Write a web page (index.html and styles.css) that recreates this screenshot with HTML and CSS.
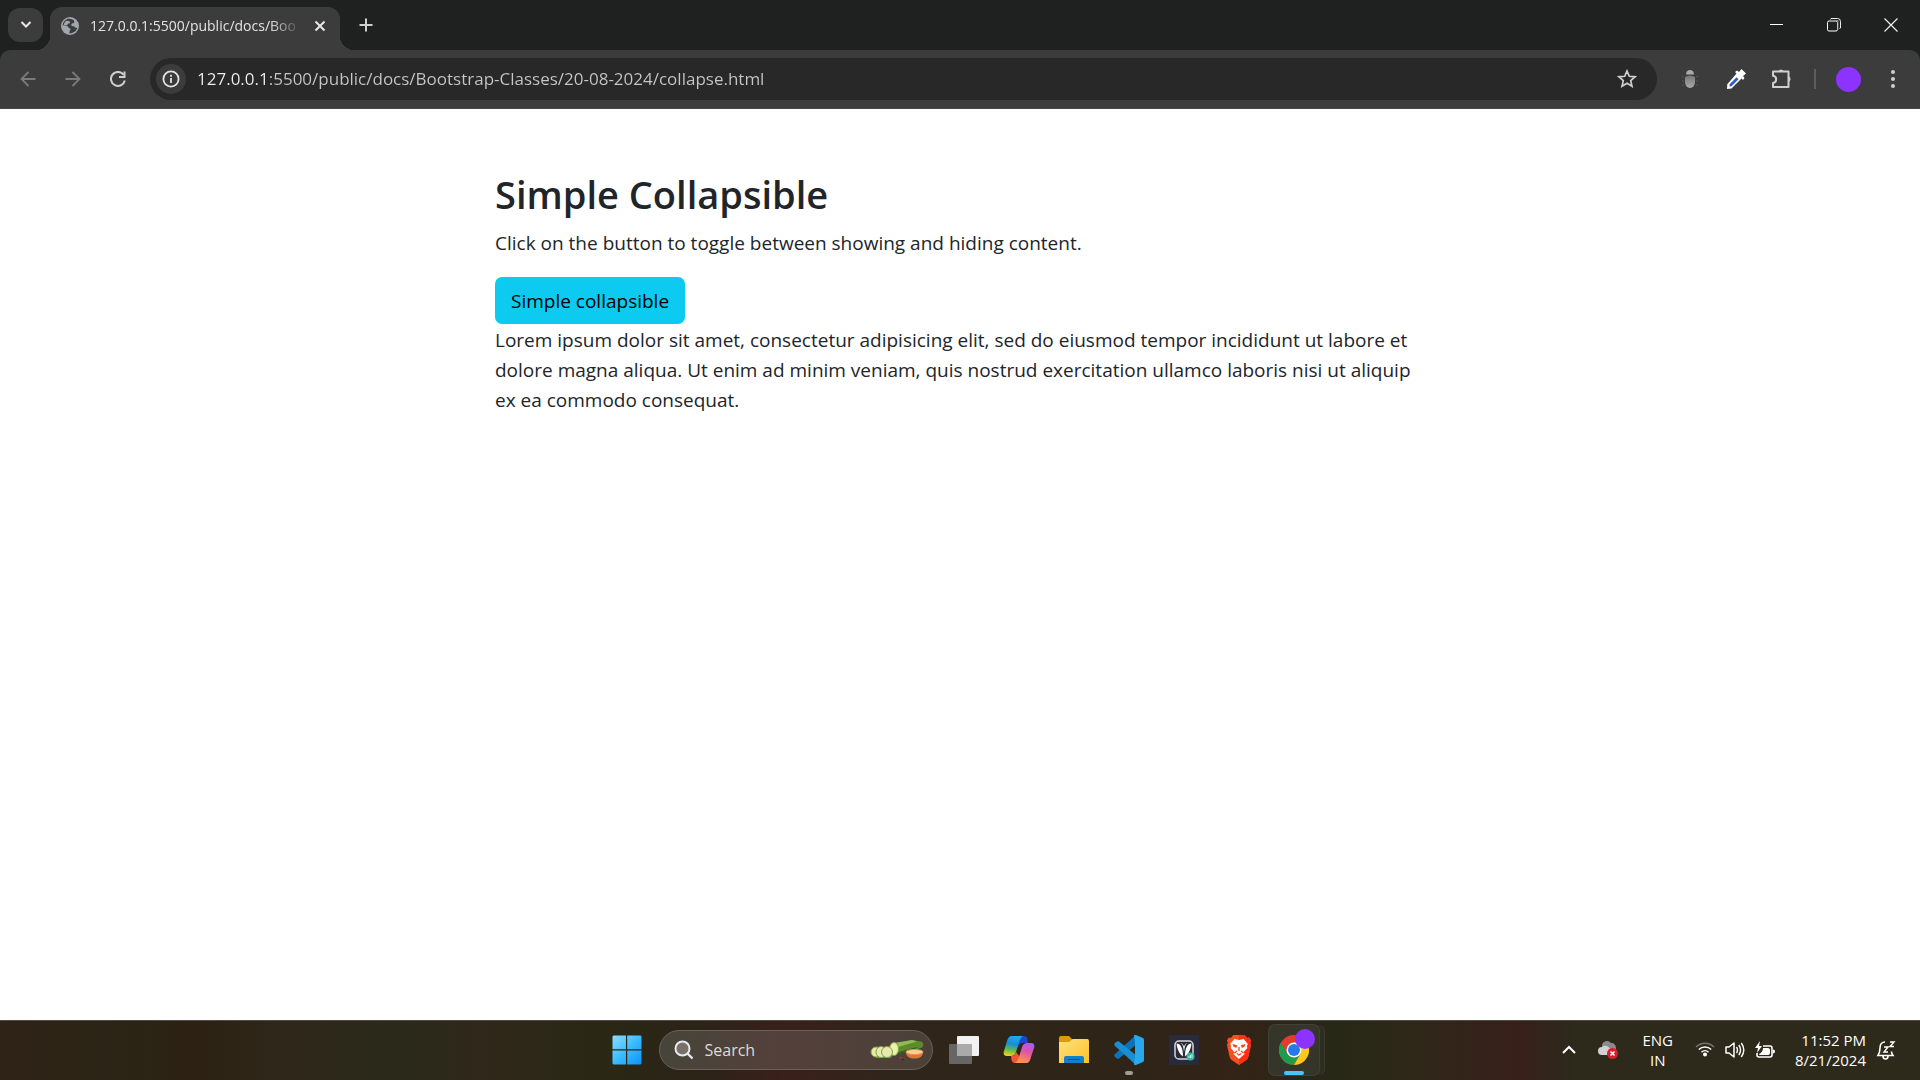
FILE: index.html
```html
<!DOCTYPE html>
<html lang="en">
<head>
<meta charset="utf-8">
<title>Simple Collapsible</title>
<link rel="stylesheet" href="styles.css">
</head>
<body>
<header class="browser">
  <div class="tab-strip">
    <button class="tab-search" aria-label="Search tabs"><svg width="12" height="12" viewBox="0 0 12 12"><path d="M1.500 3 6 7.500 10.500 3" fill="none" stroke="#e8e8e8" stroke-width="2"/></svg></button>
    <div class="tab">
      <svg width="18" height="18" viewBox="0 0 18 18"><circle cx="9" cy="9" r="9" fill="#a0a6ad"/><path d="M7 1.800C4 2.600 1.800 5.300 1.600 8.400c1.700-.2 3.600.1 5 .9 1 .7.6 1.700 1.800 2 1.500.3 1.200 1.500.6 2.300-.7.900-.6 1.600-.6 2.700 3.700.3 7-2.100 7.800-5.500-.8.300-1.800.2-2.300-.6-.6-1-1.800-.8-2.800-1.200-1.200-.5-1-2-.1-2.500.8-.4 1.900-.3 2.200-1.100.2-.8-.4-1.300-.3-2.200C11.500 2.200 9 1.300 7 1.800Z" fill="#3c3c3c"/><path d="M6 3.500c1 .8 2.500.2 3 1.400.3 1-.7 1.500-1.600 1.700-.9.300-.6 1.500-1.600 1.600-1 .1-2-.2-3-.1C3 6 4.200 4.200 6 3.500ZM3 11c1.200 0 2.400.4 3 1.300.4.800.3 1.800.2 2.900C4.600 14.500 3.400 13 3 11Z" fill="#a0a6ad"/></svg>
      <span class="tab-title">127.0.0.1:5500/public/docs/Boo</span>
      <button class="icon-button tab-close" aria-label="Close tab"><svg width="12" height="12" viewBox="0 0 12 12"><path d="m1.500 1.500 9 9m0-9-9 9" stroke="#e8e8e8" stroke-width="2"/></svg></button>
    </div>
    <button class="icon-button new-tab" aria-label="New tab"><svg width="14" height="14" viewBox="0 0 14 14"><path d="M7 .5v13M.5 7h13" stroke="#d0d0d0" stroke-width="2"/></svg></button>
    <div class="window-buttons">
      <button class="icon-button" aria-label="Minimize"><svg width="14" height="14" viewBox="0 0 14 14"><path d="M0 6.500h13" stroke="#fff"/></svg></button>
      <button class="icon-button" aria-label="Restore"><svg width="14" height="14" viewBox="0 0 14 14"><path d="M3.500 1.500 4 .5h6.500a3 3 0 0 1 3 3V10l-1 .5" fill="none" stroke="#eee"/><rect x=".5" y="3" width="10" height="10" rx="1.500" fill="none" stroke="#fff"/><path d="M2 2.500h9v9" fill="none" stroke="#888" stroke-width="1"/></svg></button>
      <button class="icon-button" aria-label="Close window"><svg width="14" height="14" viewBox="0 0 14 14"><path d="m.5.5 13 13m0-13-13 13" stroke="#eee" stroke-width="1.200"/></svg></button>
    </div>
  </div>
  <div class="toolbar">
    <div class="nav-buttons">
      <button class="icon-button" aria-label="Back"><svg width="16" height="16" viewBox="0 0 16 16"><path d="M15.500 8H2m6.500-7L1.500 8l7 7" fill="none" stroke="#7b7b7b" stroke-width="1.800"/></svg></button>
      <button class="icon-button" aria-label="Forward"><svg width="16" height="16" viewBox="0 0 16 16"><path d="M.5 8H14M7.500 1l7 7-7 7" fill="none" stroke="#7b7b7b" stroke-width="1.800"/></svg></button>
      <button class="icon-button" aria-label="Reload"><svg width="16" height="16" viewBox="0 0 16 16"><path d="M14.800 9.500A7 7 0 1 1 13.500 3.600" fill="none" stroke="#cfcfcf" stroke-width="2"/><path d="M14.500.5v5.500H9" fill="none" stroke="#cfcfcf" stroke-width="2"/></svg></button>
    </div>
    <div class="omnibox">
      <button class="site-info" aria-label="View site information"><svg width="18" height="18" viewBox="0 0 18 18"><circle cx="9" cy="9" r="7.600" fill="none" stroke="#e3e3e3" stroke-width="1.800"/><path d="M9 8v5M9 4.800v2" stroke="#e3e3e3" stroke-width="1.800"/></svg></button>
      <input class="address" type="text" aria-label="Address" value="127.0.0.1:5500/public/docs/Bootstrap-Classes/20-08-2024/collapse.html">
      <button class="icon-button" aria-label="Bookmark this page"><svg width="20" height="20" viewBox="0 0 20 20"><path d="m10 2 2.300 5.300 5.700.5-4.300 3.800 1.300 5.700-5-3-5 3 1.300-5.700L2 7.800l5.700-.5Z" fill="none" stroke="#cfcfcf" stroke-width="1.700"/></svg></button>
    </div>
    <div class="extensions">
      <button class="icon-button" aria-label="Debug extension"><svg width="18" height="20" viewBox="0 0 18 20"><defs><linearGradient id="bug" x2="0" y2="1"><stop stop-color="#777"/><stop offset="1" stop-color="#aaa"/></linearGradient></defs><path d="M5 5.500a4 4.500 0 0 1 8 0Z" fill="#aaa"/><path d="M4 8q5-3 10 0v5a5 6 0 0 1-10 0Z" fill="url(#bug)"/><path d="M1 7l2 1M1 12h2m-2 5 2-1.500M17 7l-2 1m2 4h-2m2 5-2-1.500" stroke="#575757"/></svg></button>
      <button class="icon-button" aria-label="Color picker"><svg width="22" height="22" viewBox="0 0 22 22"><path d="m12 5 5 5-10.500 10.500L2 21l.3-4.800Z" fill="#fff"/><path d="m11.500 9.300 2 2-7 7-2 .3.200-2.300Z" fill="#3158c8"/><path d="m10 4 2-1.500 2 1.500 2.500-3 4.500 4.500-3 2.500 1.500 2-1.500 2Z" fill="#fff"/></svg></button>
      <button class="icon-button" aria-label="Extensions"><svg width="22" height="22" viewBox="0 0 22 22"><path d="M2 3.500h15.500V19H2v-4c4.200-.7 4.200-6.500 0-7.200Z" fill="none" stroke="#cfcfcf" stroke-width="2" stroke-linejoin="round"/><path d="M7.500 3a2.800 2.800 0 0 1 5 0ZM18 8.500a2.800 2.800 0 0 1 0 5Z" fill="#cfcfcf"/></svg></button>
      <span class="divider"></span>
      <button class="avatar" aria-label="Profile"></button>
      <button class="icon-button" aria-label="Menu"><svg width="6" height="20" viewBox="0 0 6 20"><circle cx="3" cy="3" r="2" fill="#cfcfcf"/><circle cx="3" cy="10" r="2" fill="#cfcfcf"/><circle cx="3" cy="17" r="2" fill="#cfcfcf"/></svg></button>
    </div>
  </div>
</header>

<main class="page">
  <div class="container">
    <h2 class="heading">Simple Collapsible</h2>
    <p class="lead">Click on the button to toggle between showing and hiding content.</p>
    <button class="button-info" aria-expanded="true" aria-controls="demo">Simple collapsible</button>
    <div class="collapse" id="demo">Lorem ipsum dolor sit amet, consectetur adipisicing elit, sed do eiusmod tempor incididunt ut labore et dolore magna aliqua. Ut enim ad minim veniam, quis nostrud exercitation ullamco laboris nisi ut aliquip ex ea commodo consequat.</div>
  </div>
</main>

<footer class="taskbar">
  <div class="apps">
    <button class="app" aria-label="Start"><svg width="30" height="30" viewBox="0 0 30 30"><defs><linearGradient id="win" x2="1" y2="1"><stop stop-color="#8ddcff"/><stop offset=".5" stop-color="#3bbcff"/><stop offset="1" stop-color="#0c93fb"/></linearGradient></defs><path d="M1.500.5H14v13.700H.5V1.500ZM15.200.5h13.300l1 1v12.700H15.200ZM.5 15.400H14v14H1.500l-1-1ZM15.200 15.400h14.300v13l-1 1H15.200Z" fill="url(#win)"/></svg></button>
    <div class="search">
      <svg width="20" height="20" viewBox="0 0 20 20"><circle cx="8.500" cy="8.500" r="7" fill="#777168" stroke="#e9e9ee" stroke-width="2"/><path d="m13.500 13.500 5 5" stroke="#e9e9ee" stroke-width="2.400"/></svg>
      <input class="search-input" type="text" aria-label="Search" placeholder="Search">
      <svg width="54" height="24" viewBox="0 0 54 24"><path d="m22 6 20-4 9 1.500c3 1 3 5 0 6.500L25 17Z" fill="#5d8b2c"/><path d="m24 5 18-3 5 1.500L28 9Z" fill="#91b955"/><path d="m29 14 14-4 5-1-7 4-16 4Z" fill="#365d1c"/><path d="M2 14h22l-3 6H6Z" fill="#5f8f2e"/><ellipse cx="24" cy="11" rx="4.500" ry="6.500" fill="#edf0ac" stroke="#7fa53c"/><g fill="#e6ebad" stroke="#81a442"><ellipse cx="6" cy="14" rx="5" ry="5"/><ellipse cx="11" cy="14" rx="5" ry="5.500"/><ellipse cx="17" cy="14" rx="5.500" ry="5.500"/></g><path d="M36 14h17c0 5-4 6.500-8.500 6.500S36 19 36 14Z" fill="#d87835"/><ellipse cx="44.500" cy="14" rx="8.500" ry="2.500" fill="#f4cf97" stroke="#e69a55"/><path d="m29 19 3 1m-2 2 3-2 2 1" stroke="#a43b30"/></svg>
    </div>
    <button class="app" aria-label="Task view"><svg width="32" height="30" viewBox="0 0 32 30"><rect x="1" y="9" width="23" height="20" rx="1" fill="#666"/><rect x="9" y="1" width="22" height="20" rx="1" fill="#f2f2f2"/><path d="M9 9h15v12H9Z" fill="#aaa"/></svg></button>
    <button class="app" aria-label="Copilot"><svg width="32" height="30" viewBox="0 0 32 30"><defs><linearGradient id="cpa" x1=".5" x2=".3" y2="1"><stop stop-color="#20a9ef"/><stop offset=".4" stop-color="#168ed8"/><stop offset=".7" stop-color="#65b94e"/><stop offset="1" stop-color="#f3d41c"/></linearGradient><linearGradient id="cpb" x1=".7" x2=".3" y2="1"><stop stop-color="#a35dff"/><stop offset=".4" stop-color="#e153a7"/><stop offset="1" stop-color="#ff9b46"/></linearGradient></defs><path d="M17 1h4c2 0 3 1 3.500 3L25 8h-5c-3 0-4 2-5 5Z" fill="#1d45ce"/><path d="M9 1h11c-2 1-3 3-4 7l-3 9c-1 3-3 4-5 4H4c-3 0-4-2-3-5L4 6c1-3 2-5 5-5Z" fill="url(#cpa)"/><path d="M8 21c3 0 4-1 5-4l4 5-2 6h-3c-2 0-3-1-3.500-3Z" fill="#f25635"/><path d="M23 28H12c2-1 3-3 4-6l3-10c1-3 3-4 5-4h4c3 0 4 2 3 5l-3 9c-1 4-2 6-5 6Z" fill="url(#cpb)"/></svg></button>
    <button class="app" aria-label="File Explorer"><svg width="32" height="30" viewBox="0 0 32 30"><defs><linearGradient id="fold" x2="1" y2="1"><stop stop-color="#ffe17d"/><stop offset="1" stop-color="#fcc228"/></linearGradient></defs><path d="M1 3q0-2 2-2h8l3 3h16v5H1Z" fill="#dd9b09"/><path d="M1 7h10l4-3h14q2 0 2 2v22H1Z" fill="url(#fold)"/><path d="M6 28v-5q0-2 2-2h16q2 0 2 2v5Z" fill="#137ecb"/><path d="M10 24.500h12" stroke="#075495"/></svg></button>
    <button class="app running" aria-label="Visual Studio Code"><svg width="32" height="32" viewBox="0 0 32 32"><path d="M23 1 2 20c-1 1-1 2 0 3l2 1.500c1 .5 1.500.5 2 0L24 10Z" fill="#0d72b9"/><path d="M23 31 2 12c-1-1-1-2 0-3l2-1.500c1-.5 1.500-.5 2 0L24 22Z" fill="#188fd5"/><path d="m23 1 7 3q1 .5 1 2v20q0 1.500-1 2l-7 3c-1 .3-2 0-2-1l1-6V8l-1-6c0-1 1-1.300 2-1Z" fill="#2aa8ee"/></svg></button>
    <button class="app" aria-label="JioTV"><svg width="30" height="30" viewBox="0 0 30 30"><path d="M0 0h30v30H0Z" fill="#292b3b"/><rect x="6" y="6" width="18" height="18" rx="4" fill="none" stroke="#d8d8d8" stroke-width="1.500"/><path d="M7.500 8.500c4 0 6.500 4 6.500 13-4-3-6-8-6.500-13Zm15 0c-4 0-6.500 4-6.500 13 4-3 6-8 6.500-13ZM12 8c1.500 1 2.500 4 3 9 .5-5 1.500-8 3-9-1.500.5-2.500 2-3 4-.5-2-1.500-3.500-3-4Z" fill="#fff"/><circle cx="21.500" cy="21.500" r="4" fill="#35b7a1"/><path d="M20 23v-2m1.500 2v-3m1.500 3v-4" stroke="#bff1e8"/></svg></button>
    <button class="app" aria-label="Brave"><svg width="26" height="30" viewBox="0 0 28 30" preserveAspectRatio="none"><path d="m8 0h12l3 3 2-.5 2 3-1 2.500 1 2-3 12q-.5 2-2 3l-8 5-8-5q-1.500-1-2-3L1 10l1-2-1-2.500 2-3L5 3Z" fill="#f84f1f"/><path d="m14 0h6l3 3 2-.5 2 3-1 2.500 1 2-3 12q-.5 2-2 3l-8 5Z" fill="#ff2e16"/><path d="m9 4 5 1 5-1 4.500 5-1 2 .5 2-4 4 1 2-6 5-6-5 1-2-4-4 .5-2-1-2Z" fill="#fff"/><path d="m7 9 5 1.200L11 13l-3-1.500Zm14 0-5 1.200 1 2.800 3-1.500Z" fill="#f84117"/><path d="m12 16-3 2m7-2 3 2m-7.500.5L14 20l2.500-1.500M14 12v4" fill="none" stroke="#f84117" stroke-width="1.400"/></svg></button>
    <button class="app active" aria-label="Google Chrome"><svg width="30" height="30" viewBox="0 0 30 30"><circle cx="15" cy="15" r="15" fill="#e33b2e"/><path d="M2 7.500A15 15 0 0 0 15 30l6.500-11.200-13 0Z" fill="#1f9b4b"/><path d="M15 30A15 15 0 0 0 28 7.500H15l6.500 11.300Z" fill="#fcc71e"/><circle cx="15" cy="15" r="7.500" fill="#fff"/><circle cx="15" cy="15" r="6" fill="#2879e8"/></svg><span class="badge"></span></button>
  </div>
  <div class="tray">
    <button class="icon-button" aria-label="Show hidden icons"><svg width="14" height="10" viewBox="0 0 14 10"><path d="m1 8 6-6 6 6" fill="none" stroke="#fff" stroke-width="2"/></svg></button>
    <button class="icon-button cloud" aria-label="OneDrive"><svg width="20" height="18" viewBox="0 0 20 18"><path d="M4 5a5 5 0 0 1 9-3c3 0 5 2 5 5v4H4Z" fill="#8a8a8a"/><path d="M4 14a4 4 0 0 1 0-8c2-2 6-2 8 2l-2 6Z" fill="#d2d2d2"/><circle cx="14.500" cy="12.500" r="5.500" fill="#d81f2d"/><path d="m12.500 10.500 4 4m0-4-4 4" stroke="#fff" stroke-width="1.500"/></svg></button>
    <div class="language">ENG<br>IN</div>
    <div class="status">
      <svg width="20" height="16" viewBox="0 0 20 16"><path d="M1 6a12.700 12.700 0 0 1 18 0" fill="none" stroke="#77736a" stroke-width="1.500"/><g fill="none" stroke="#fff" stroke-width="1.600"><path d="M3.800 8.500a8.800 8.800 0 0 1 12.400 0M6.500 11.200a5 5 0 0 1 7 0"/></g><circle cx="10" cy="13.500" r="2" fill="#fff"/></svg>
      <svg width="20" height="18" viewBox="0 0 20 18"><path d="M1 6h3l5-4v14l-5-4H1Z" fill="none" stroke="#fff" stroke-width="1.500" stroke-linejoin="round"/><path d="M11.500 6q2 3 0 6m2.300-8q3.500 5 0 10m2.500-12q5 7 0 14" fill="none" stroke="#fff" stroke-width="1.400"/></svg>
      <svg width="20" height="18" viewBox="0 0 20 18"><path d="M8 5h7q2 0 2 2v7q0 2-2 2H4q-2 0-2-2v-2" fill="none" stroke="#fff" stroke-width="1.600"/><path d="M8 7h5q2 0 2 2v3q0 2-2 2H5q-1 0-1-1 4-2 4-6ZM18 8.500q2 0 2 2t-2 2ZM5 0 0 7h3l-1 5 5-7H4Z" fill="#fff"/></svg>
    </div>
    <time class="clock">11:52 PM<br>8/21/2024</time>
    <svg width="20" height="20" viewBox="0 0 20 20"><path d="M9 2C6 2 4 4 4 8c0 4-.8 5.500-2 7.500h15C16 14 15.500 13 15.500 11.500M7 16q0 3 2.500 3t2.500-3" fill="none" stroke="#fff" stroke-width="1.600"/><path d="M8 7h4l-4 5h4M14 2h4l-4 4.500h4" fill="none" stroke="#fff" stroke-width="1.400"/></svg>
  </div>
</footer>
</body>
</html>
```
FILE: styles.css
```css
* { box-sizing: border-box; }
body {
  margin: 0;
  min-height: 100vh;
  display: flex;
  flex-direction: column;
  background: #fff;
  color: #212529;
  font-family: "Open Sans", "Noto Sans", sans-serif;
}
button, input {
  margin: 0;
  padding: 0;
  border: 0;
  background: transparent;
  color: inherit;
  font: inherit;
}
svg { display: block; flex: none; }

.icon-button {
  display: flex;
  align-items: center;
  justify-content: center;
  flex: none;
}

/* Browser frame */
.browser { background: #1f2120; }
.tab-strip {
  display: flex;
  align-items: center;
  height: 50px;
  padding-left: 8px;
}
.tab-search {
  display: flex;
  align-items: center;
  justify-content: center;
  width: 35px;
  height: 34px;
  border-radius: 12px;
  background: #3c3c3c;
}
.tab {
  position: relative;
  display: flex;
  align-items: center;
  align-self: flex-end;
  gap: 11px;
  width: 290px;
  height: 43px;
  margin-left: 7px;
  padding: 0 12px 6px 11px;
  border-radius: 12px 12px 0 0;
  background: #3c3c3c;
  color: #e3e3e3;
}
.tab::before, .tab::after {
  content: "";
  position: absolute;
  bottom: 0;
  width: 14px;
  height: 14px;
}
.tab::before {
  right: 100%;
  background: radial-gradient(circle at 0 0, transparent 14px, #3c3c3c 14px);
}
.tab::after {
  left: 100%;
  background: radial-gradient(circle at 100% 0, transparent 14px, #3c3c3c 14px);
}
.tab-title {
  flex: 1;
  min-width: 0;
  white-space: nowrap;
  font-size: 14px;
  line-height: 20px;
  mask-image: linear-gradient(90deg, #000 180px, transparent 212px);
}
.tab-close { width: 16px; height: 20px; }
.new-tab { width: 36px; height: 36px; margin-left: 8px; }
.window-buttons { display: flex; margin-left: auto; padding-right: 1px; }
.window-buttons .icon-button { width: 57px; height: 50px; }

.toolbar {
  display: flex;
  align-items: center;
  height: 59px;
  border-bottom: 1px solid #4a4646;
  border-radius: 10px 10px 0 0;
  background: #3c3c3c;
}
.nav-buttons { display: flex; padding: 0 10px 0 5px; }
.nav-buttons .icon-button { width: 45px; height: 40px; }
.omnibox {
  display: flex;
  align-items: center;
  flex: 1;
  height: 42px;
  padding: 0 20px 0 6px;
  border-radius: 21px;
  background: #282828;
}
.site-info {
  display: flex;
  align-items: center;
  justify-content: center;
  width: 30px;
  height: 30px;
  border-radius: 50%;
  background: #3c3c3c;
}
.address {
  flex: 1;
  min-width: 0;
  margin-left: 11px;
  background: linear-gradient(90deg, #f0f0f0 73px, #c7c7c7 73px);
  background-clip: text;
  color: transparent;
  font-size: 17px;
  line-height: 24px;
  outline: 0;
}
.extensions { display: flex; align-items: center; padding: 0 4px 0 10px; }
.extensions .icon-button { width: 46px; height: 40px; }
.divider { width: 2px; height: 20px; margin: 0 20px 0 9px; background: #5d5d5d; }
.avatar { width: 25px; height: 25px; margin-right: 9px; border-radius: 50%; background: #8c33ff; }

/* Document */
.page { flex: 1; padding: 61px 24px; }
.container { max-width: 930px; margin: 0 auto; font-size: 19px; line-height: 30px; }
.heading { margin: 0 0 10px; font-size: 38px; font-weight: 600; line-height: 48px; }
.lead { margin: 0 0 19px; }
.button-info {
  display: block;
  margin-bottom: 1px;
  padding: 9px 16px 8px;
  border-radius: 7px;
  background: #0dcaf0;
  color: #000;
}

/* Taskbar */
.taskbar {
  display: grid;
  grid-template-columns: 1fr auto 1fr;
  align-items: center;
  height: 60px;
  padding-bottom: 2px;
  border-top: 1px solid #514c43;
  background: linear-gradient(90deg, #2e2316, #2b2415 7%, #2c2113 10%, #2f281a 15%, #2b2a1a 21%, #30281a 25%, #2a2815 31%, #2b2417 36%, #3a201a 41%, #30251a 46%, #2e2417 60%, #342317 64%, #272817 69%, #2d2818 73%, #38201a 79%, #2d291b 82%, #2e2a1b);
  color: #fff;
  font-size: 15px;
  line-height: 20px;
}
.apps { display: flex; align-items: center; grid-column: 2; }
.app {
  position: relative;
  display: flex;
  align-items: center;
  justify-content: center;
  width: 55px;
  height: 50px;
}
.search {
  display: flex;
  align-items: center;
  gap: 11px;
  width: 274px;
  height: 40px;
  margin: 0 4px;
  padding: 0 8px 0 14px;
  border: 1px solid #68605a;
  border-radius: 20px;
  background: linear-gradient(90deg, #46453a, #54403a 45%, #4b4139);
}
.search-input { flex: 1; min-width: 0; font-size: 16px; line-height: 24px; }
.search-input::placeholder { color: #dedbd7; opacity: 1; }
.running::after, .active::after {
  content: "";
  position: absolute;
  bottom: 0;
  left: 50%;
  width: 8px;
  height: 4px;
  margin-left: -4px;
  border-radius: 2px;
  background: #a19d97;
}
.active { width: 50px; margin: 0 2px; border-radius: 6px; background: #36352a; box-shadow: 0 0 0 1px #424036, 5px 0 0 #2e2e20, 6px 0 0 #3a392e; }
.active::after { width: 20px; margin-left: -10px; background: #4cc2ff; }
.badge { position: absolute; top: 4px; right: 4px; width: 20px; height: 20px; border-radius: 50%; background: #8c33ff; }
.tray { display: flex; align-items: center; justify-content: flex-end; padding-right: 24px; }
.cloud { margin: 0 24px 0 22px; }
.language { text-align: center; }
.status { display: flex; gap: 10px; margin: 0 20px 0 22px; }
.clock { margin-right: 10px; text-align: right; }
```
